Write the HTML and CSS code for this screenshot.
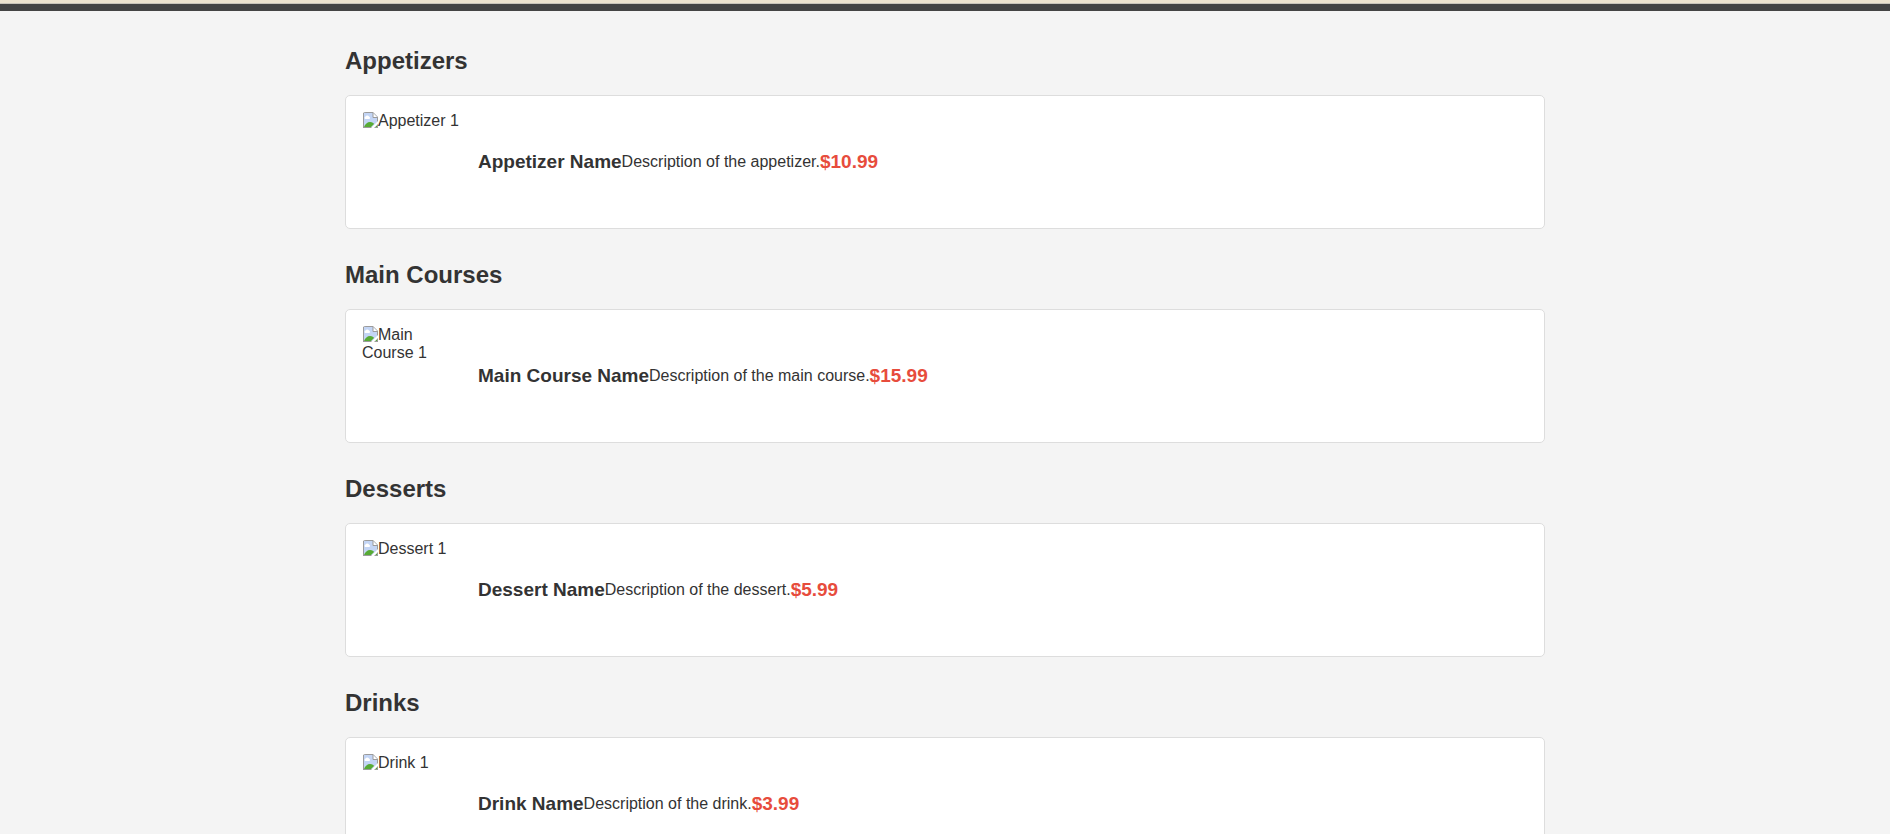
FILE: index.html
```html
<!DOCTYPE html>
<html lang="en">
<head>
  <meta charset="UTF-8">
  <meta name="viewport" content="width=device-width, initial-scale=1.0">
  <title>Menu</title>
  <link rel="stylesheet" href="styles.css">
</head>
<body>
  <!-- Shared placeholder icon -->
  <svg class="sprite" aria-hidden="true">
    <symbol id="thumb" viewBox="0 0 16 16">
      <path d="M1 0h10l5 5v11H1z" fill="#9b9b9b"/>
      <path d="M2 1h9l4 4v10H2z" fill="#c3d5f5"/>
      <path d="M3 7a1.500 1.500 0 0 1 .5-2.500 2 2 0 0 1 3.500 0A1.500 1.500 0 0 1 7.500 7z" fill="#fff"/>
      <path d="M2 15c1-3 3.500-5 6-5s3.500 1 4 2l-3 3z" fill="#57ab35"/>
      <path d="M13 15l2-2v2z" fill="#57ab35"/>
      <path d="M11 1v4h4z" fill="#fff"/>
      <path d="M11 1v4.500h4.500" fill="none" stroke="#9b9b9b"/>
      <path d="M9 16l7-7v3l-4 4z" fill="#fff"/>
    </symbol>
  </svg>

  <header class="top-bar"></header>

  <main class="menu">
    <section class="menu-section">
      <h2>Appetizers</h2>
      <div class="menu-item">
        <div class="item-image"><svg class="thumb"><use href="#thumb"/></svg>Appetizer 1</div>
        <div class="item-details">
          <h3>Appetizer Name</h3>
          <p>Description of the appetizer.</p>
          <span class="price">$10.99</span>
        </div>
      </div>
    </section>

    <section class="menu-section">
      <h2>Main Courses</h2>
      <div class="menu-item">
        <div class="item-image"><svg class="thumb"><use href="#thumb"/></svg>Main Course 1</div>
        <div class="item-details">
          <h3>Main Course Name</h3>
          <p>Description of the main course.</p>
          <span class="price">$15.99</span>
        </div>
      </div>
    </section>

    <section class="menu-section">
      <h2>Desserts</h2>
      <div class="menu-item">
        <div class="item-image"><svg class="thumb"><use href="#thumb"/></svg>Dessert 1</div>
        <div class="item-details">
          <h3>Dessert Name</h3>
          <p>Description of the dessert.</p>
          <span class="price">$5.99</span>
        </div>
      </div>
    </section>

    <section class="menu-section">
      <h2>Drinks</h2>
      <div class="menu-item">
        <div class="item-image"><svg class="thumb"><use href="#thumb"/></svg>Drink 1</div>
        <div class="item-details">
          <h3>Drink Name</h3>
          <p>Description of the drink.</p>
          <span class="price">$3.99</span>
        </div>
      </div>
    </section>
  </main>
</body>
</html>
```
FILE: styles.css
```css
* {
  box-sizing: border-box;
  margin: 0;
  padding: 0;
}

body {
  font-family: Arial, "Liberation Sans", sans-serif;
  font-size: 16px;
  line-height: 18px;
  color: #333;
  background-color: #f4f4f4;
}

.sprite {
  display: none;
}

.top-bar {
  height: 11px;
  border-top: 3px solid #ede3cf;
  background: linear-gradient(#c9c4ba 1px, #444 1px);
}

.menu {
  max-width: 1200px;
  margin: 0 auto;
  padding-top: 36px;
}

.menu-section {
  margin-bottom: 32px;
}

.menu-section h2 {
  font-size: 24px;
  line-height: 28px;
  margin-bottom: 20px;
}

.menu-item {
  display: flex;
  gap: 16px;
  padding: 16px;
  background-color: #fff;
  border: 1px solid #ddd;
  border-radius: 5px;
}

.item-image {
  width: 100px;
  height: 100px;
  border-radius: 4px;
  overflow: hidden;
}

.thumb {
  width: 16px;
  height: 16px;
  vertical-align: top;
}

.item-details {
  flex: 1;
  display: flex;
  align-items: center;
}

.item-details h3,
.price {
  font-size: 19px;
  font-weight: bold;
}

.price {
  color: #e74c3c;
}
```
